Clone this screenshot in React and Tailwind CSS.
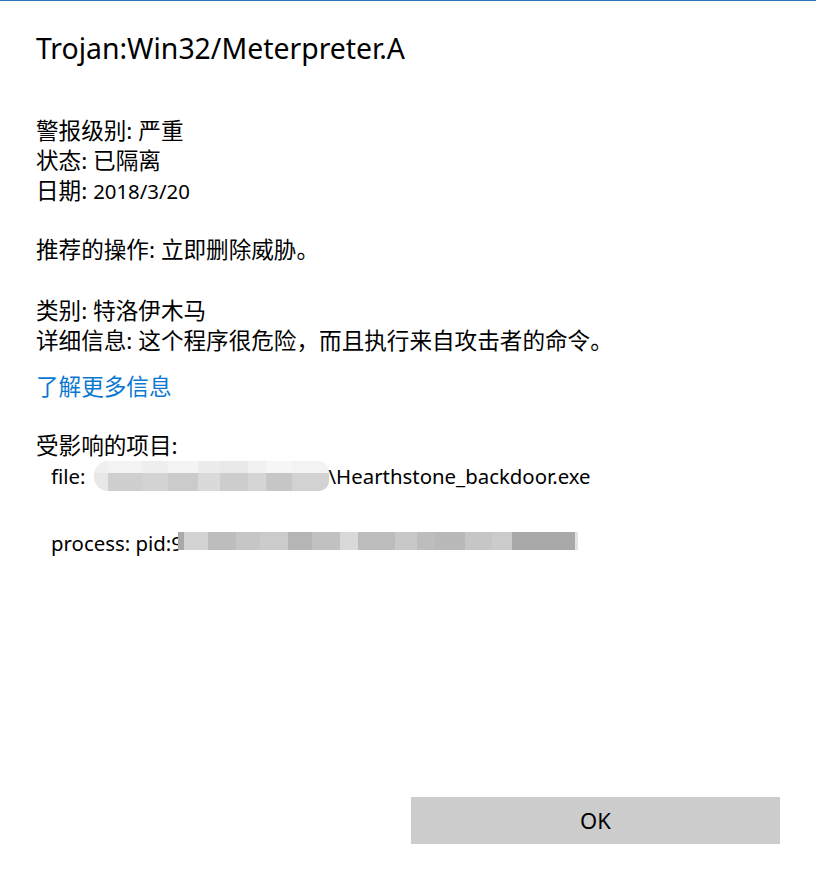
const fileBlur = [
  { w: 14, top: '#efefef', bot: '#e8e8e8' },
  { w: 34, top: '#f3f3f3', bot: '#cfcfcf' },
  { w: 26, top: '#eeeeee', bot: '#d3d3d3' },
  { w: 30, top: '#f4f4f4', bot: '#cbcbcb' },
  { w: 22, top: '#ececec', bot: '#dadada' },
  { w: 28, top: '#e9e9e9', bot: '#cdcdcd' },
  { w: 18, top: '#f1f1f1', bot: '#d5d5d5' },
  { w: 26, top: '#f6f6f6', bot: '#c6c6c6' },
  { w: 37, top: '#f3f3f3', bot: '#d2d2d2' },
];

const pidBlur = [
  { w: 6, c: '#a9a9a9' },
  { w: 24, c: '#d3d3d3' },
  { w: 28, c: '#bdbdbd' },
  { w: 24, c: '#c6c6c6' },
  { w: 28, c: '#cbcbcb' },
  { w: 24, c: '#b5b5b5' },
  { w: 28, c: '#c1c1c1' },
  { w: 18, c: '#d9d9d9' },
  { w: 37, c: '#bcbcbc' },
  { w: 22, c: '#c8c8c8' },
  { w: 18, c: '#bdbdbd' },
  { w: 30, c: '#b9b9b9' },
  { w: 27, c: '#c6c6c6' },
  { w: 20, c: '#cbcbcb' },
  { w: 63, c: '#a9a9a9' },
  { w: 3, c: '#e3e3e3' },
];

const Latin = ({ children }) => <span className="text-[20.4px]">{children}</span>;

const App = () => {
  return (
    <div className="min-h-[881px] flex flex-col bg-white border-t border-[#2f74b5] text-black font-['Noto_Sans','Noto_Sans_CJK_SC',sans-serif]">
      <div className="px-[36px]">
        <h1 className="mt-[29px] text-[28.4px] leading-[36px] font-normal">Trojan:Win32/Meterpreter.A</h1>

        <div className="mt-[50px] text-[22.6px] leading-[30px]">
          <p>警报级别: 严重</p>
          <p>状态: 已隔离</p>
          <p>日期: <Latin>2018/3/20</Latin></p>

          <p className="mt-[29px]">推荐的操作: 立即删除威胁。</p>

          <p className="mt-[31px]">类别: 特洛伊木马</p>
          <p>详细信息: 这个程序很危险，而且执行来自攻击者的命令。</p>

          <p className="mt-[16px] text-[#0a78d2]">了解更多信息</p>

          <p className="mt-[29px]">受影响的项目:</p>
          <div className="pl-[15px]">
            <div className="flex items-center">
              <Latin>file:</Latin>
              <span className="ml-[8px] flex h-[30px] w-[235px] flex-col overflow-hidden rounded-l-[14px] rounded-r-[10px]">
                <span className="flex h-[12px]">
                  {fileBlur.map((b, i) => (
                    <span key={i} className="h-full" style={{ width: b.w, background: b.top }} />
                  ))}
                </span>
                <span className="flex h-[18px]">
                  {fileBlur.map((b, i) => (
                    <span key={i} className="h-full" style={{ width: b.w, background: b.bot }} />
                  ))}
                </span>
              </span>
              <Latin>\Hearthstone_backdoor.exe</Latin>
            </div>

            <div className="mt-[37px] flex items-center">
              <Latin>process: pid:9</Latin>
              <span className="ml-[-5px] -mt-[5px] flex h-[18px]">
                {pidBlur.map((b, i) => (
                  <span key={i} className="h-full" style={{ width: b.w, background: b.c }} />
                ))}
              </span>
            </div>
          </div>
        </div>
      </div>

      <div className="mt-auto mb-[37px] flex justify-end pr-[36px]">
        <button className="h-[47px] w-[369px] bg-[#cccccc] text-[22px]">OK</button>
      </div>
    </div>
  );
};

export default App;
